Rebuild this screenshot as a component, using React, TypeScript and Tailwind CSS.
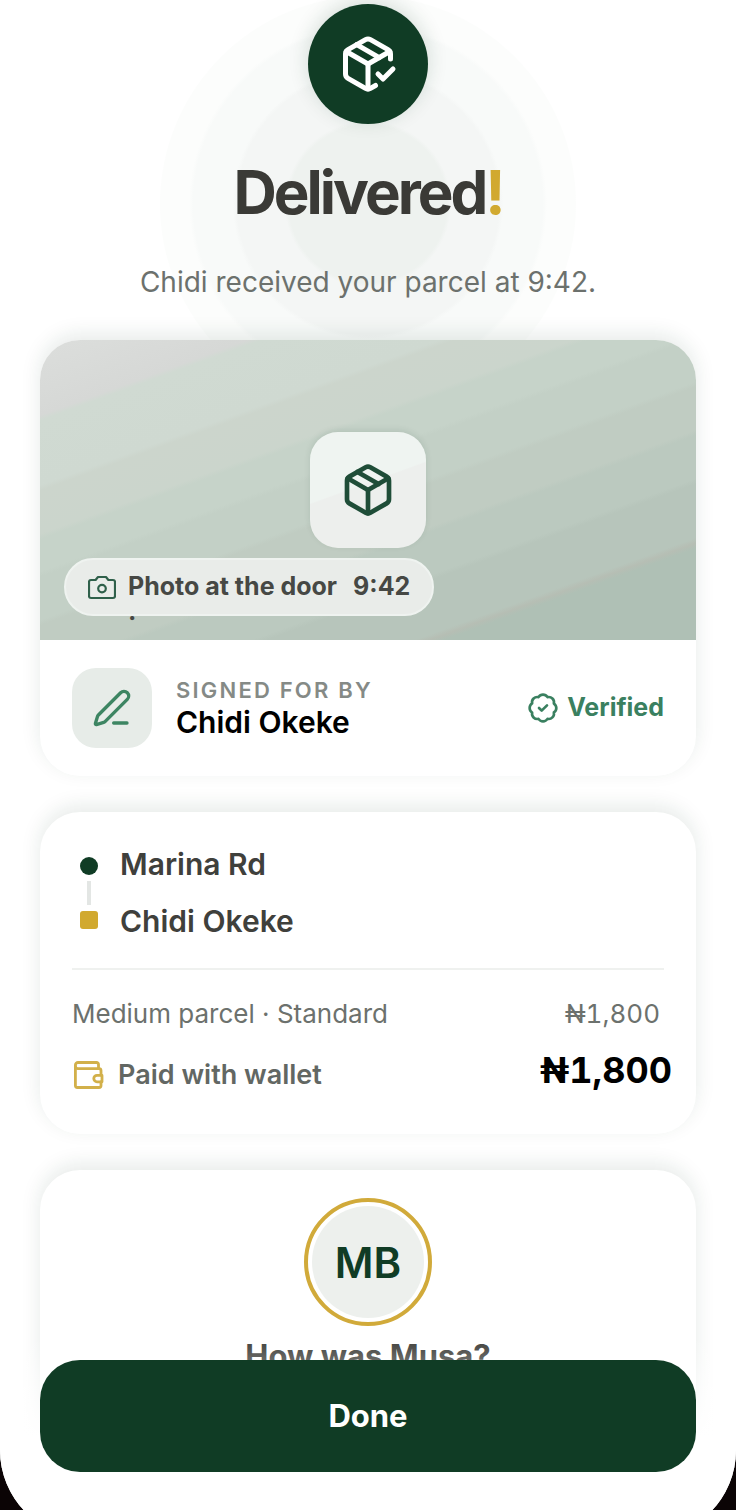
import type { ReactNode } from 'react';
import { BadgeCheck, Package, PackageCheck, PenLine } from 'lucide-react';

function Card({ children }: { children: ReactNode }) {
  return (
    <section className="rounded-[40px] bg-white shadow-[0_-6px_20px_rgba(16,60,37,0.10)]">
      {children}
    </section>
  );
}

// Inter's naira sign is very wide, so it comes from Roboto
function Naira({ amount }: { amount: string }) {
  return (
    <>
      <span className="font-['Roboto','Noto_Sans',sans-serif]">₦</span>
      {amount}
    </>
  );
}

function CameraIcon() {
  return (
    <svg className="size-7 shrink-0" viewBox="0 0 28 28" fill="none" stroke="#2f604a" strokeWidth="2.2" strokeLinejoin="round" aria-hidden="true">
      <path d="M3 7h4.6l2.4-3h8l2.4 3H25a2 2 0 0 1 2 2v14a2 2 0 0 1-2 2H3a2 2 0 0 1-2-2V9a2 2 0 0 1 2-2z" />
      <circle cx="14" cy="15.6" r="3.8" />
    </svg>
  );
}

function WalletIcon() {
  return (
    <svg className="size-8 shrink-0" viewBox="0 0 32 32" fill="none" stroke="#d2b04a" strokeWidth="2.8" strokeLinecap="round" strokeLinejoin="round" aria-hidden="true">
      <path d="M26.5 9V5.5a2 2 0 0 0-2-2H6a2.6 2.6 0 0 0-2.6 2.6v20.4a2 2 0 0 0 2 2H27a2 2 0 0 0 2-2V23" />
      <path d="M3.4 7.4A2.6 2.6 0 0 0 6 9.6h21a2 2 0 0 1 2 2V16" />
      <path d="M30 16.4h-5a3.2 3.2 0 0 0 0 6.4h5z" />
    </svg>
  );
}

function Hero() {
  return (
    <header className="relative flex flex-col items-center pt-1">
      <div className="pointer-events-none absolute -top-1 left-1/2 size-[416px] -translate-x-1/2 rounded-full bg-[radial-gradient(closest-side,#eef2ef_38%,#f4f6f5_40%,#f4f6f5_63%,#f8faf9_65%,#f8faf9_84%,#fcfdfc_86%)]" />
      <div className="relative flex size-[120px] items-center justify-center rounded-full bg-[#103c25] text-white shadow-[0_-4px_20px_rgba(16,60,37,0.16)]">
        <PackageCheck size={60} strokeWidth={2} />
      </div>
      <h1 className="relative mt-8 text-[60px] leading-[72px] font-bold tracking-tighter text-[#3a3a36]">
        Delivered<span className="text-[#d1a92f]">!</span>
      </h1>
      <p className="relative mt-9 text-[28px] leading-9 text-[#6c716d]">Chidi received your parcel at 9:42.</p>
    </header>
  );
}

function ProofCard() {
  return (
    <Card>
      <div className="relative flex h-[300px] items-center justify-center rounded-t-[40px] bg-[linear-gradient(160deg,#dcdedc_0%,#d6d8d6_14%,#d0dad2_15%,#cfd9d1_27%,#ccd5cc_28%,#cbd5cc_36%,#c6d3c9_37%,#c6d3c9_43%,#c3d0c6_44%,#c3d0c6_52%,#c0ccc2_53%,#c0ccc2_61%,#bbc9bf_62%,#bbc9bf_70%,#b7c5bb_71%,#b7c5bb_81%,#b6beb4_82%,#afc0b5_83%)]">
        <div className="flex size-[116px] items-center justify-center rounded-[28px] bg-[linear-gradient(160deg,#eff4f1_45%,#edefed_46%)] text-[#1f4d38] shadow-[0_-2px_6px_rgba(16,60,37,0.10)]">
          <Package size={56} strokeWidth={2} />
        </div>
        <div className="absolute bottom-6 left-6 flex h-[58px] items-center rounded-full border-2 border-[#eff3f0] bg-[#e9ece9] px-[22px] text-[25px] font-bold text-[#464844]">
          <CameraIcon />
          <span className="ml-3">Photo at the door</span>
          <span className="absolute top-11 left-[62px] leading-7">·</span>
          <time className="ml-4">9:42</time>
        </div>
      </div>
      <div className="flex items-center px-8 py-7">
        <div className="flex size-20 items-center justify-center rounded-3xl bg-[#e7ece8] text-[#3d8562]">
          <PenLine size={40} strokeWidth={2} />
        </div>
        <div className="ml-6 flex flex-col">
          <span className="text-[22px] leading-7 font-semibold tracking-widest text-[#858a86]">SIGNED FOR BY</span>
          <span className="text-[30px] leading-9 font-semibold text-black">Chidi Okeke</span>
        </div>
        <div className="ml-auto flex items-center gap-2 text-[25px] font-bold text-[#3a8060]">
          <BadgeCheck size={32} strokeWidth={2} />
          Verified
        </div>
      </div>
    </Card>
  );
}

function TripCard() {
  return (
    <Card>
      <div className="px-8 pt-6 pb-[41px]">
        <div className="flex items-center pb-[18px]">
          <div className="ml-2 flex flex-col items-center gap-1.5">
            <span className="size-[18px] rounded-full bg-[#103c25]" />
            <span className="h-6 w-1 bg-[#e3e6e4]" />
            <span className="size-[18px] rounded-[3px] bg-[#d1a92f]" />
          </div>
          <ul className="ml-[22px] text-[30px] leading-[57px] font-semibold text-[#3f403c]">
            <li>Marina Rd</li>
            <li>Chidi Okeke</li>
          </ul>
        </div>
        <div className="border-t-2 border-[#eff1ef]" />
        <div className="flex items-center justify-between pt-[26px] pr-1 text-[26px] leading-9 text-[#6c716d]">
          <span>Medium parcel · Standard</span>
          <span className="tabular-nums"><Naira amount="1,800" /></span>
        </div>
        <div className="-mr-2 mt-4 flex items-center justify-between">
          <span className="flex items-center gap-3.5 pt-2 text-[27px] leading-9 font-semibold text-[#626763]">
            <WalletIcon />
            Paid with wallet
          </span>
          <strong className="text-4xl leading-[44px] font-bold text-black tabular-nums"><Naira amount="1,800" /></strong>
        </div>
      </div>
    </Card>
  );
}

function RatingCard() {
  return (
    <Card>
      <div className="flex flex-col items-center pt-7 pb-44">
        <div className="flex size-32 items-center justify-center rounded-full border-4 border-[#d1aa3a] bg-white p-1">
          <div className="flex size-full items-center justify-center rounded-full bg-[#edf0ed] text-[42px] font-semibold text-[#103c25]">
            MB
          </div>
        </div>
        <h2 className="mt-3 text-[31px] leading-9 font-bold text-[#3a3a36]">How was Musa?</h2>
      </div>
    </Card>
  );
}

export default function App() {
  return (
    <div className="flex h-screen flex-col overflow-hidden bg-[#0b0405] font-['Inter','Liberation_Sans',sans-serif]">
      <div className="relative -mb-7 flex min-h-0 flex-1 flex-col overflow-hidden rounded-b-[88px] bg-white">
        <main className="min-h-0 flex-1 overflow-y-auto px-10 [scrollbar-width:none]">
          <Hero />
          <div className="relative mt-10 flex flex-col gap-9">
            <ProofCard />
            <TripCard />
            <RatingCard />
          </div>
        </main>
        {/* action bar floats over the end of the list */}
        <footer className="absolute inset-x-0 bottom-0 bg-linear-to-b from-transparent to-white to-50% px-10 pt-6 pb-[66px]">
          <button
            type="button"
            className="h-28 w-full rounded-[40px] bg-[#103c25] text-[31px] font-bold text-white"
          >
            Done
          </button>
        </footer>
      </div>
    </div>
  );
}
